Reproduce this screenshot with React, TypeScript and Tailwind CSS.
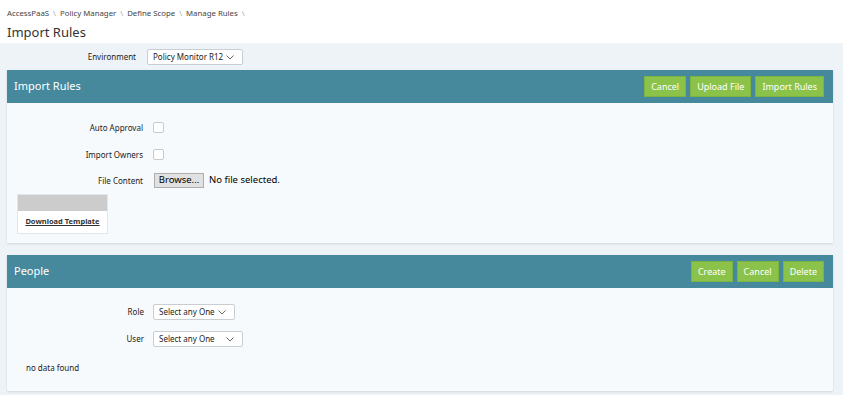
import React from "react";

const Chevron = () => (
  <svg width="8" height="5" viewBox="0 0 8 5" className="ml-auto shrink-0">
    <path d="M0.5 0.5 L4 4 L7.5 0.5" fill="none" stroke="#555" strokeWidth="0.9" />
  </svg>
);

const Btn = ({ children }: { children: React.ReactNode }) => (
  <div className="h-[21px] px-[6px] flex items-center bg-[#8bc34a] border border-[#7cb342] text-white text-[9px] whitespace-nowrap">
    {children}
  </div>
);

const Select = ({ text, w }: { text: string; w: string }) => (
  <div className={`h-[16px] ${w} bg-white border border-[#c9ced3] rounded-[2px] flex items-center pl-[5px] pr-[8px] text-[8px] text-[#222] whitespace-nowrap shrink-0`}>
    <span>{text}</span>
    <Chevron />
  </div>
);

export default function App() {
  return (
    <div
      className="w-[843px] h-[395px] bg-[#eef3f8] text-[#222] overflow-hidden"
      style={{ fontFamily: '"Noto Sans", "Open Sans", sans-serif' }}
    >
      <div className="bg-white h-[43px] px-[7px] pt-[7px]">
        <div className="text-[7.8px] text-[#444] leading-[12px] flex gap-[4px]">
          <span>AccessPaaS</span><span className="text-[#aaa]">\</span>
          <span>Policy Manager</span><span className="text-[#aaa]">\</span>
          <span>Define Scope</span><span className="text-[#aaa]">\</span>
          <span>Manage Rules</span><span className="text-[#aaa]">\</span>
        </div>
        <div className="text-[13px] leading-[18px] mt-[4px] text-[#333]">Import Rules</div>
      </div>

      <div className="flex items-center h-[27px] pt-[1px]">
        <div className="w-[137px] text-right text-[8px] pr-[1px]">Environment</div>
        <div className="ml-[10px]">
          <Select text="Policy Monitor R12" w="w-[96px]" />
        </div>
      </div>

      <div className="mx-[7px] mr-[10px] bg-[#f7fafc] shadow-[0_1px_2px_rgba(0,0,0,0.12)]">
        <div className="h-[33px] bg-[#46899d] flex items-center px-[7px] pr-[9px]">
          <div className="text-white text-[11px]">Import Rules</div>
          <div className="ml-auto flex gap-[4px]">
            <Btn>Cancel</Btn>
            <Btn>Upload File</Btn>
            <Btn>Import Rules</Btn>
          </div>
        </div>
        <div className="h-[140px] pt-[18px] px-[10px]">
          <div className="flex items-center h-[13px]">
            <div className="w-[126px] text-right text-[8px]">Auto Approval</div>
            <div className="ml-[10px] w-[11px] h-[11px] border border-[#c6cbd0] bg-white rounded-[2px]" />
          </div>
          <div className="flex items-center h-[13px] mt-[14px]">
            <div className="w-[126px] text-right text-[8px]">Import Owners</div>
            <div className="ml-[10px] w-[11px] h-[11px] border border-[#c6cbd0] bg-white rounded-[2px]" />
          </div>
          <div className="flex items-center h-[15px] mt-[12px]">
            <div className="w-[126px] text-right text-[8px]">File Content</div>
            <div className="ml-[11px] h-[15px] w-[50px] bg-[#e1e1e1] border border-[#adadad] flex items-center justify-center text-[9.5px] text-black">
              Browse...
            </div>
            <div className="ml-[5px] text-[9.5px] text-black">No file selected.</div>
          </div>
          <div className="mt-[6px] w-[91px] border border-[#e3e7ea] bg-white">
            <div className="h-[16px] bg-[#cccccc]" />
            <div className="h-[22px] flex items-center justify-center text-[7.5px] font-bold underline text-[#333]">
              Download Template
            </div>
          </div>
        </div>
      </div>

      <div className="mx-[7px] mr-[10px] mt-[12px] bg-[#f7fafc] shadow-[0_1px_2px_rgba(0,0,0,0.12)]">
        <div className="h-[33px] bg-[#46899d] flex items-center px-[7px] pr-[9px]">
          <div className="text-white text-[11px]">People</div>
          <div className="ml-auto flex gap-[4px]">
            <Btn>Create</Btn>
            <Btn>Cancel</Btn>
            <Btn>Delete</Btn>
          </div>
        </div>
        <div className="h-[103px] pt-[16px] px-[19px]">
          <div className="flex items-center h-[16px]">
            <div className="w-[118px] text-right text-[8px]">Role</div>
            <div className="ml-[9px]"><Select text="Select any One" w="w-[82px]" /></div>
          </div>
          <div className="flex items-center h-[16px] mt-[11px]">
            <div className="w-[118px] text-right text-[8px]">User</div>
            <div className="ml-[9px]"><Select text="Select any One" w="w-[90px]" /></div>
          </div>
          <div className="mt-[15px] text-[8px] text-[#222]">no data found</div>
        </div>
      </div>
    </div>
  );
}
